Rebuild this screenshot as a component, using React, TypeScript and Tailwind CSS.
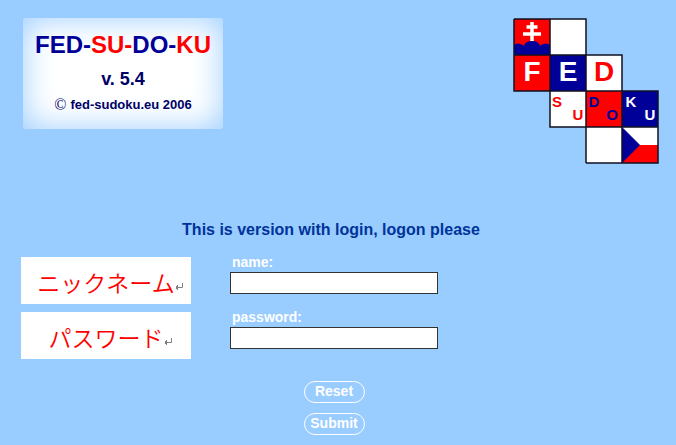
import React from "react";
import clsx from "clsx";

const fields = [
  { id: "name", label: "name:", type: "text", hint: "ニックネーム" },
  { id: "password", label: "password:", type: "password", hint: "パスワード" },
];

function ReturnMark() {
  return (
    <svg width="8" height="8" viewBox="0 0 8 8" className="mt-2 shrink-0" aria-hidden="true">
      <path d="M7.5 0V4.5H1M2.5 2V7M1.5 3V6" fill="none" stroke="#808080" />
    </svg>
  );
}

function Logo() {
  return (
    <svg
      width="147"
      height="147"
      viewBox="0 0 147 147"
      className="shrink-0 font-['Liberation_Sans',Arial,sans-serif] font-bold"
      role="img"
      aria-label="FED SUDOKU"
    >
      {/* Slovak cross over the three hills */}
      <rect x="1" y="1" width="36" height="36" fill="#ff0000" />
      <path d="M19 4V25M13.5 9H24.5M10 16H28" stroke="#ffffff" strokeWidth="3.5" />
      <path
        d="M1 37V27Q5 24 10 27L11 28Q12 23 19 23Q26 23 27 28L28 27Q33 24 37 27V37Z"
        fill="#000099"
      />
      <rect x="37" y="1" width="36" height="36" fill="#ffffff" />
      <rect x="1" y="37" width="36" height="36" fill="#ff0000" />
      <rect x="37" y="37" width="36" height="36" fill="#000099" />
      <rect x="73" y="37" width="36" height="36" fill="#ffffff" />
      <rect x="37" y="73" width="36" height="36" fill="#ffffff" />
      <rect x="73" y="73" width="36" height="36" fill="#ff0000" />
      <rect x="109" y="73" width="36" height="36" fill="#000099" />
      <rect x="73" y="109" width="36" height="36" fill="#ffffff" />
      {/* Czech flag */}
      <rect x="109" y="109" width="36" height="18" fill="#ffffff" />
      <rect x="109" y="127" width="36" height="18" fill="#ff0000" />
      <path d="M109 109L127 127L109 145Z" fill="#000099" />
      <path
        d="M1 1H73V145M1 1V73H145V145H73M1 37H109V145M37 1V109H145"
        fill="none"
        stroke="#111122"
        strokeWidth="1.5"
      />
      <g fontSize="28" textAnchor="middle">
        <text x="19" y="63" fill="#ffffff">F</text>
        <text x="55" y="63" fill="#ffffff">E</text>
        <text x="91" y="63" fill="#ff0000">D</text>
      </g>
      <g fontSize="15" textAnchor="middle">
        <text x="44" y="89" fill="#ff0000">S</text>
        <text x="65" y="102" fill="#ff0000">U</text>
        <text x="81" y="89" fill="#000099">D</text>
        <text x="99" y="102" fill="#000099">O</text>
        <text x="118" y="89" fill="#ffffff">K</text>
        <text x="137" y="102" fill="#ffffff">U</text>
      </g>
    </svg>
  );
}

export default function App() {
  const buttonClass =
    "flex h-[22px] w-[61px] items-center justify-center rounded-full border border-white pb-0.5 text-sm font-bold text-white";

  return (
    <main className="min-h-screen bg-[#99ccff] pt-[18px] pb-2 font-['Liberation_Sans',Arial,sans-serif]">
      <header className="flex items-start justify-between pr-4 pl-[23px]">
        <div className="flex h-[111px] w-[200px] flex-col items-center rounded-sm bg-white pt-[11px] font-bold text-[#000066] shadow-[inset_0_0_32px_#99ccff]">
          <h1 className="text-2xl text-[#000099]">
            FED-<span className="text-[#ff0000]">SU-</span>DO-
            <span className="text-[#ff0000]">KU</span>
          </h1>
          <p className="mt-1 text-lg">v. 5.4</p>
          <p className="flex items-center gap-1 text-[13px] leading-6">
            <span className="font-['Liberation_Serif',serif] text-base font-normal">©</span>
            fed-sudoku.eu 2006
          </p>
        </div>
        <Logo />
      </header>

      <h2 className="mt-[53px] pr-3.5 text-center text-base font-bold text-[#003399]">
        This is version with login, logon please
      </h2>

      <form
        className="mt-[15px] grid grid-cols-[170px_208px] gap-x-[39px] gap-y-2 pl-[21px]"
        onSubmit={(e) => e.preventDefault()}
      >
        {fields.map((field) => (
          <React.Fragment key={field.id}>
            <div
              className={clsx(
                "flex h-[47px] items-center justify-center bg-white pt-1 pl-2 text-[23px] font-[350] text-[#ff0000]",
                "font-['Noto_Sans_CJK_JP',sans-serif]"
              )}
            >
              <span lang="ja">{field.hint}</span>
              <ReturnMark />
            </div>
            <div>
              <label
                htmlFor={field.id}
                className="block pl-0.5 text-sm leading-[10px] font-bold text-white"
              >
                {field.label}
              </label>
              <input
                id={field.id}
                type={field.type}
                className="mt-[5px] block h-[22px] w-full border border-[#333333] bg-white px-1 text-sm"
              />
            </div>
          </React.Fragment>
        ))}
        <div className="col-start-2 mt-3.5 flex flex-col items-center gap-2.5">
          <button type="reset" className={buttonClass}>
            Reset
          </button>
          <button type="submit" className={buttonClass}>
            Submit
          </button>
        </div>
      </form>
    </main>
  );
}
